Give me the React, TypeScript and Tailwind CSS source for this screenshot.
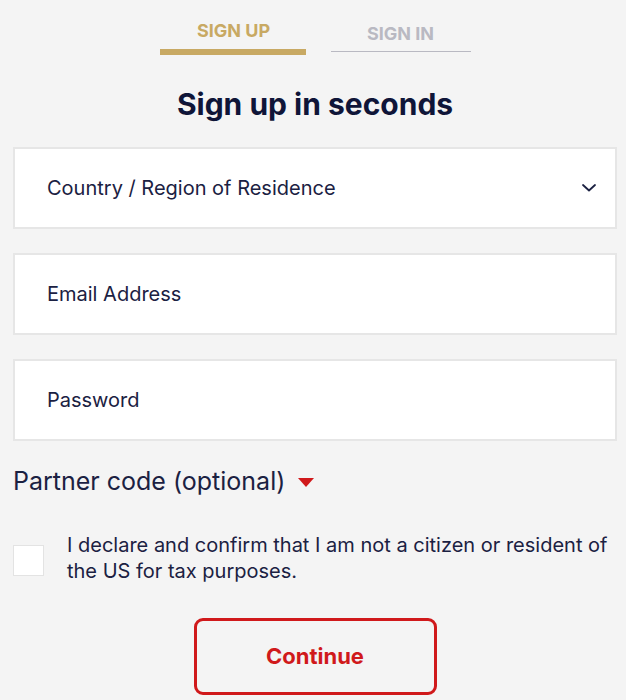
import React from "react";

const font = { fontFamily: "Inter, 'Noto Sans', Arial, sans-serif" };

function Field({ label, select }: { label: string; select?: boolean }) {
  return (
    <div className="flex h-[82px] items-center justify-between border-2 border-[#e6e6e6] bg-white pl-[32px] pr-[19px]">
      <span className="text-[20px] leading-[24px] text-[#1b2142]">{label}</span>
      {select && (
        <svg width="14" height="8" viewBox="0 0 14 8" fill="none">
          <path d="M1 1l6 5.5L13 1" stroke="#1b2142" strokeWidth="1.8" strokeLinecap="round" strokeLinejoin="round" />
        </svg>
      )}
    </div>
  );
}

export default function App() {
  return (
    <div className="min-h-screen bg-[#f4f4f4] pl-[13px] pr-[9px]" style={font}>
      {/* tabs */}
      <div className="flex items-start justify-center gap-[25px] pt-[20px]">
        <div className="flex w-[146px] flex-col items-center">
          <span className="pl-[2px] text-[18px] font-bold leading-[22px] text-[#c8a963]">SIGN UP</span>
          <div className="mt-[7px] h-[6px] w-full bg-[#c8a963]" />
        </div>
        <div className="mt-[3px] flex w-[140px] flex-col items-center">
          <span className="text-[18px] font-bold leading-[22px] text-[#b9b9c2]">SIGN IN</span>
          <div className="mt-[6px] h-px w-full bg-[#b9b9c2]" />
        </div>
      </div>

      <h1 className="mt-[31px] text-center text-[30px] font-bold leading-[36px] text-[#0f1538]">
        Sign up in seconds
      </h1>

      <div className="mt-[25px] flex flex-col gap-[24px]">
        <Field label="Country / Region of Residence" select />
        <Field label="Email Address" />
        <Field label="Password" />
      </div>

      <div className="mt-[25px] flex items-center gap-[13px]">
        <span className="text-[25px] leading-[30px] text-[#1b2142]">Partner code (optional)</span>
        <svg width="16" height="9" viewBox="0 0 16 9" className="mt-[2px]">
          <path d="M0 0h16L8 9z" fill="#d0191b" />
        </svg>
      </div>

      <div className="mt-[36px] flex items-start gap-[23px]">
        <div className="mt-[13px] h-[31px] w-[31px] shrink-0 border border-[#e3e3e3] bg-white" />
        <p className="text-[20px] leading-[26px] text-[#1b2142]">
          I declare and confirm that I am not a citizen or resident of the US for tax purposes.
        </p>
      </div>

      <div className="mt-[34px] flex justify-center">
        <button className="h-[77px] w-[243px] rounded-[9px] border-[3px] border-[#d0191b] text-[22px] font-bold text-[#d0191b]">
          Continue
        </button>
      </div>
    </div>
  );
}
